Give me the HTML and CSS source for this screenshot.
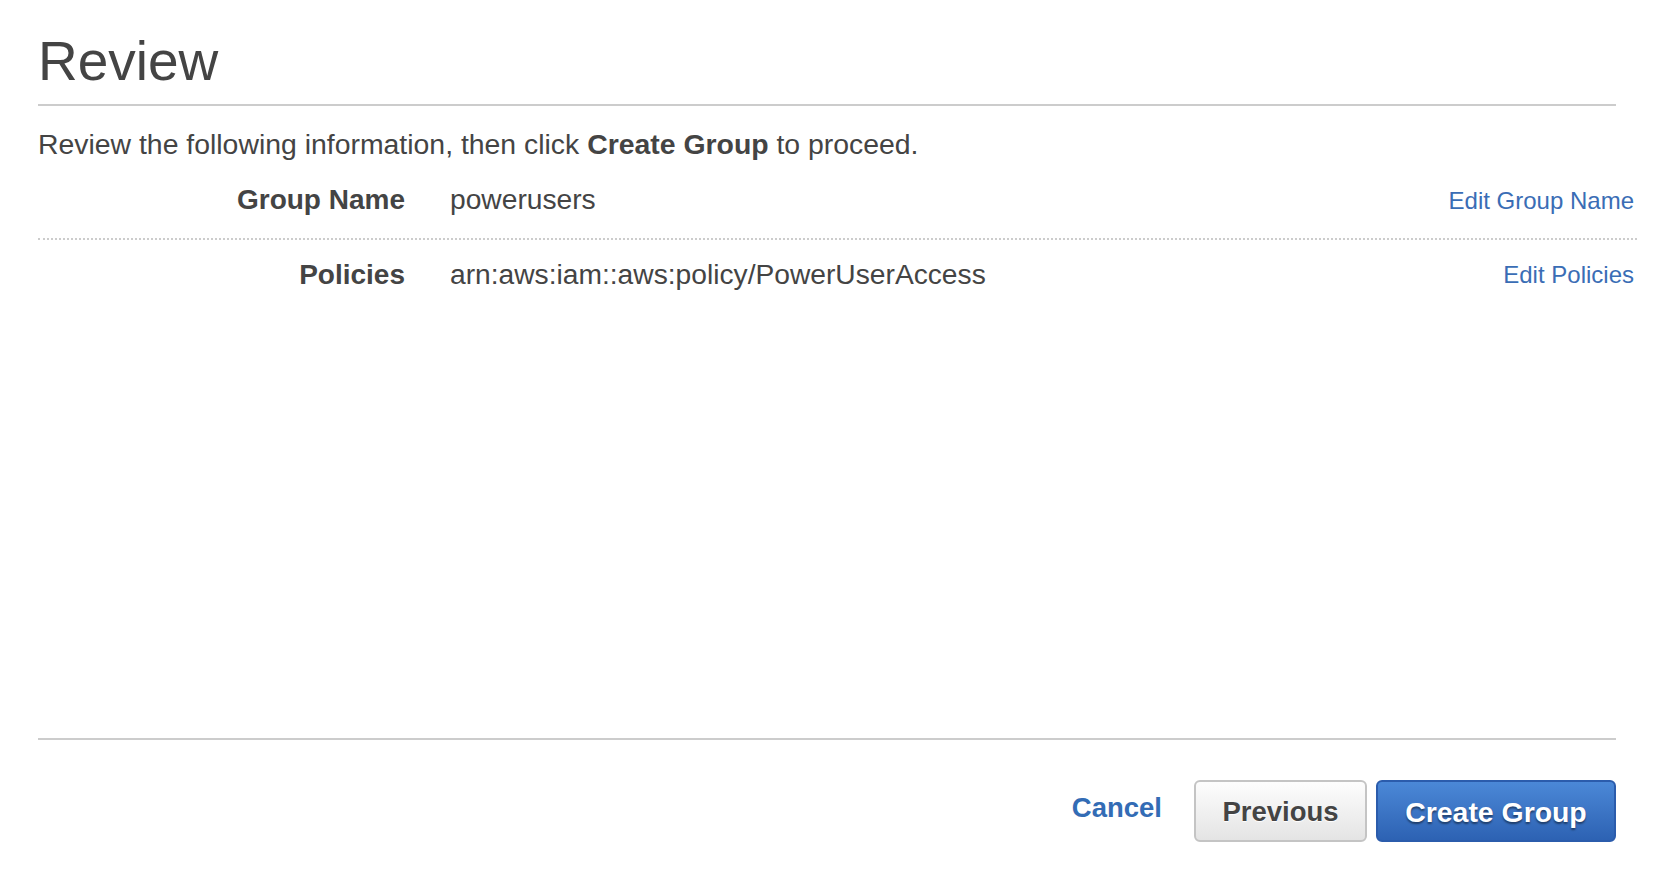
FILE: index.html
```html
<!DOCTYPE html>
<html lang="en">
<head>
<meta charset="utf-8">
<title>Review</title>
<link rel="stylesheet" href="styles.css">
</head>
<body>
<div class="page">
  <div class="content">
    <h1 class="title">Review</h1>
    <div class="rule"></div>
    <p class="intro">Review the following information, then click <strong>Create Group</strong> to proceed.</p>
    <div class="review-table">
      <div class="row row-first">
        <div class="label">Group Name</div>
        <div class="value">powerusers</div>
        <a class="edit" href="#">Edit Group Name</a>
      </div>
      <div class="row row-second">
        <div class="label">Policies</div>
        <div class="value">arn:aws:iam::aws:policy/PowerUserAccess</div>
        <a class="edit" href="#">Edit Policies</a>
      </div>
    </div>
  </div>
  <div class="footer">
    <div class="rule"></div>
    <div class="actions">
      <a class="cancel" href="#">Cancel</a>
      <button class="btn btn-secondary" type="button">Previous</button>
      <button class="btn btn-primary" type="button">Create Group</button>
    </div>
  </div>
</div>
</body>
</html>
```

FILE: styles.css
```css
html, body {
  margin: 0;
  padding: 0;
  background: #ffffff;
}

body {
  font-family: "Liberation Sans", Arial, Helvetica, sans-serif;
  color: #444444;
}

.page {
  box-sizing: border-box;
  height: 870px;
  padding: 31px 42px 28px 38px;
  display: flex;
  flex-direction: column;
}

.content {
  flex: 1;
}

.title {
  margin: 0;
  font-size: 55px;
  line-height: 60px;
  font-weight: normal;
  color: #444444;
}

.rule {
  height: 2px;
  background: #cccccc;
}

.content .rule {
  margin-top: 13px;
}

.intro {
  margin: 20px 0 0 0;
  font-size: 28.4px;
  line-height: 36px;
}

.intro strong {
  font-weight: bold;
}

.review-table {
  margin-right: -21px;
}

.row {
  display: flex;
  align-items: baseline;
  font-size: 28px;
  line-height: 36px;
  padding-right: 3px;
}

.row .value {
  font-size: 28.2px;
}

.row-first {
  padding-top: 19px;
  padding-bottom: 19px;
  border-bottom: 2px dotted #cccccc;
}

.row-second {
  padding-top: 16px;
}

.label {
  width: 367px;
  flex: none;
  text-align: right;
  font-weight: bold;
}

.value {
  margin-left: 45px;
  flex: 1;
}

.edit {
  font-size: 24px;
  color: #3a6db5;
  text-decoration: none;
}

.row-second .edit {
  position: relative;
  top: -1px;
}

.footer .actions {
  margin-top: 40px;
  display: flex;
  justify-content: flex-end;
  align-items: center;
}

.cancel {
  font-size: 27.5px;
  line-height: 36px;
  font-weight: bold;
  color: #336cb5;
  text-decoration: none;
  margin-right: 32px;
  padding-bottom: 6px;
}

.btn {
  box-sizing: border-box;
  height: 62px;
  margin: 0;
  padding: 1px 20px 0 20px;
  border-radius: 6px;
  font-family: "Liberation Sans", Arial, Helvetica, sans-serif;
  font-size: 27.5px;
  line-height: 56px;
  font-weight: bold;
  cursor: pointer;
}

.btn-secondary {
  width: 173px;
  border: 2px solid #c4c4c4;
  background: linear-gradient(#fdfdfd, #e4e4e4);
  color: #444444;
  text-shadow: 0 1px 1px #ffffff;
}

.btn-primary {
  width: 240px;
  margin-left: 9px;
  font-size: 28.4px;
  border: 2px solid #2b5cac;
  background: linear-gradient(#4b88d7, #2d62b3);
  color: #ffffff;
  text-shadow: 0 2px 2px rgba(0, 0, 0, 0.45);
}
```
